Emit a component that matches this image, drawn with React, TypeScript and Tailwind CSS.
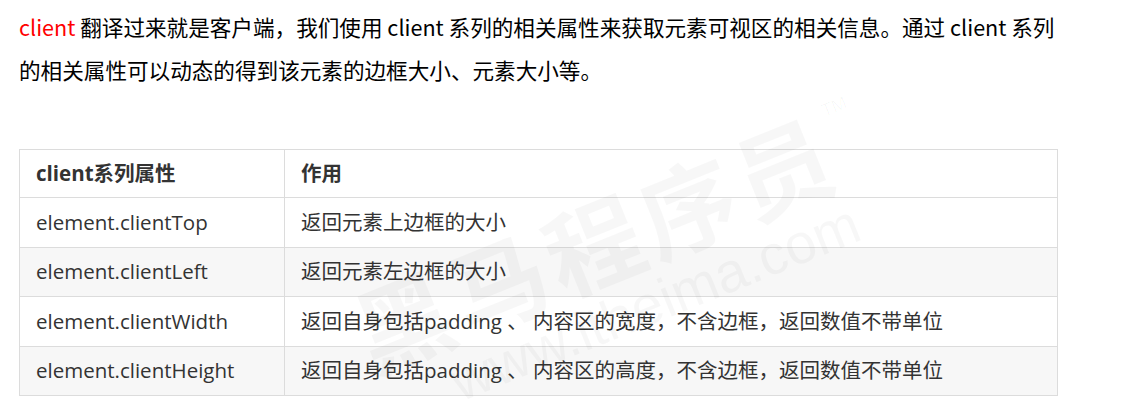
import React from "react";

const rows = [
  { name: "element.clientTop", desc: "返回元素上边框的大小" },
  { name: "element.clientLeft", desc: "返回元素左边框的大小" },
  { name: "element.clientWidth", desc: "返回自身包括padding 、 内容区的宽度，不含边框，返回数值不带单位" },
  { name: "element.clientHeight", desc: "返回自身包括padding 、 内容区的高度，不含边框，返回数值不带单位" },
];

const sans = "font-['Microsoft_YaHei','Noto_Sans_CJK_SC',sans-serif]";
const table = "font-['Open_Sans','Noto_Sans_CJK_SC',sans-serif]";

// faint site watermark laid over the table
function Watermark() {
  return (
    <div className="pointer-events-none absolute left-[350px] top-[185px] flex -rotate-[22deg] flex-col items-start text-black/[0.03]">
      <div className="flex items-start gap-1">
        <span className="text-[96px] font-bold leading-none tracking-[6px] font-['Noto_Sans_CJK_SC',sans-serif] whitespace-nowrap">
          黑马程序员
        </span>
        <span className="text-[18px] font-['Liberation_Sans',sans-serif]">TM</span>
      </div>
      <span className="ml-[70px] mt-[4px] text-[56px] leading-none font-['Liberation_Sans',sans-serif] whitespace-nowrap">
        www.itheima.com
      </span>
    </div>
  );
}

export default function App() {
  return (
    <div className="relative h-[407px] w-[1143px] overflow-hidden bg-white">
      <p className={`${sans} pl-[19px] pt-[5px] text-[21.6px] leading-[43px] text-black`}>
        <span className="text-[#ff0000]">client</span> 翻译过来就是客户端，我们使用 client 系列的相关属性来获取元素可视区的相关信息。通过 client 系列
        <br />
        的相关属性可以动态的得到该元素的边框大小、元素大小等。
      </p>

      <table className={`${table} mt-[58px] ml-[19px] w-[1039px] border-collapse text-[20.5px] text-[#333]`}>
        <thead>
          <tr className="h-[48px] bg-white">
            <th className="w-[265px] border border-[#dcdcdc] px-[16px] text-left font-bold">client系列属性</th>
            <th className="border border-[#dcdcdc] px-[16px] text-left font-bold">作用</th>
          </tr>
        </thead>
        <tbody>
          {rows.map((r, i) => (
            <tr key={r.name} className={`h-[49.5px] ${i % 2 === 1 ? "bg-[#f7f7f7]" : "bg-white"}`}>
              <td className="border border-[#dcdcdc] px-[16px]">{r.name}</td>
              <td className="border border-[#dcdcdc] px-[16px]">{r.desc}</td>
            </tr>
          ))}
        </tbody>
      </table>

      <Watermark />
    </div>
  );
}
